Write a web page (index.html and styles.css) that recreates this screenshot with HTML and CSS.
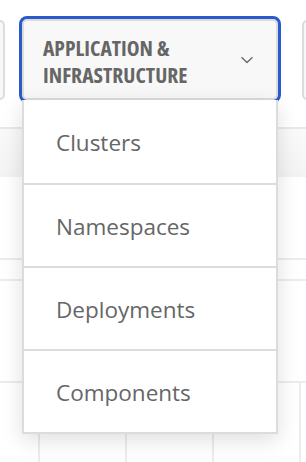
FILE: index.html
```html
<!DOCTYPE html>
<html lang="en">
<head>
  <meta charset="UTF-8" />
  <title>Category menu</title>
  <link rel="stylesheet" href="styles.css">
</head>
<body>

<div class="page">
  <!-- Toolbar with category buttons -->
  <div class="toolbar">
    <div class="tab tab-side"></div>
    <button class="tab tab-main" type="button">
      <span class="tab-label">Application &amp;<br>Infrastructure</span>
      <svg class="chevron" width="14" height="8" viewBox="0 0 14 8">
        <path d="M1.5 1.2 L7 6.6 L12.5 1.2" fill="none" stroke="#6a6a6a" stroke-width="1.4" />
      </svg>
    </button>
    <div class="tab tab-side"></div>
  </div>

  <!-- Table behind the menu -->
  <div class="grid">
    <div class="grid-head"></div>
    <div class="grid-row grid-row-tall"></div>
    <div class="grid-row grid-row-thin"></div>
    <div class="grid-row grid-row-mid"></div>
    <div class="grid-row grid-cols"></div>
  </div>

  <!-- Open dropdown -->
  <ul class="menu">
    <li>Clusters</li>
    <li>Namespaces</li>
    <li>Deployments</li>
    <li>Components</li>
  </ul>
</div>

</body>
</html>
```

FILE: styles.css
```css
/* Page */
body {
  margin: 0;
  background: #fff;
  font-family: "Open Sans", sans-serif;
  overflow: hidden;
}

.page {
  position: relative;
  width: 306px;
  height: 462px;
  overflow: hidden;
}

/* Toolbar */
.toolbar {
  display: flex;
  align-items: flex-start;
  padding-top: 19px;
  margin-left: -40px;
}

.tab {
  box-sizing: border-box;
  height: 81px;
  border: 2px solid #dcdcdc;
  border-radius: 5px;
  background: #f8f8f8;
  flex-shrink: 0;
}

.tab-side {
  width: 45px;
  margin-top: 1px;
  height: 80px;
}

.tab-main {
  width: 256px;
  margin: 0 24px 0 17px;
  padding: 0 0 0 19px;
  display: flex;
  align-items: center;
  justify-content: space-between;
  text-align: left;
  outline: 3px solid #2a5bcc;
  outline-offset: 0;
  border-radius: 5px;
  cursor: pointer;
}

.tab-label {
  font-family: "Open Sans", sans-serif;
  font-stretch: 75%;
  font-weight: bold;
  font-size: 21.6px;
  line-height: 27px;
  text-transform: uppercase;
  color: #666;
  margin-top: 2px;
}

.chevron {
  margin-right: 22px;
  margin-top: 1px;
}

/* Table behind */
.grid {
  margin-top: 27px;
}

.grid-head {
  height: 48px;
  border-top: 2px solid #e8e8e8;
  background: linear-gradient(#fafafa, #f3f3f3);
}

.grid-row {
  border-top: 2px solid #ececec;
}

.grid-row-tall {
  height: 79px;
  border-top: none;
  margin-top: 2px;
}

.grid-row-thin {
  height: 19px;
}

.grid-row-mid {
  height: 100px;
}

.grid-cols {
  height: 100px;
  background:
    linear-gradient(90deg, transparent 38px, #ececec 38px, #ececec 40px, transparent 40px) 0 0 / 87px 100% repeat-x;
}

/* Dropdown menu */
.menu {
  position: absolute;
  top: 100px;
  left: 22px;
  width: 256px;
  box-sizing: border-box;
  margin: 0;
  padding: 0;
  list-style: none;
  background: #fff;
  border: 2px solid #dcdcdc;
  border-top: none;
  box-shadow: 0 6px 20px rgba(0, 0, 0, 0.13);
}

.menu li {
  box-sizing: border-box;
  height: 83px;
  display: flex;
  align-items: center;
  padding-left: 32px;
  padding-top: 1px;
  font-size: 22.5px;
  color: #666;
  border-top: 2px solid #dcdcdc;
}

.menu li:first-child {
  border-top: none;
}
```
